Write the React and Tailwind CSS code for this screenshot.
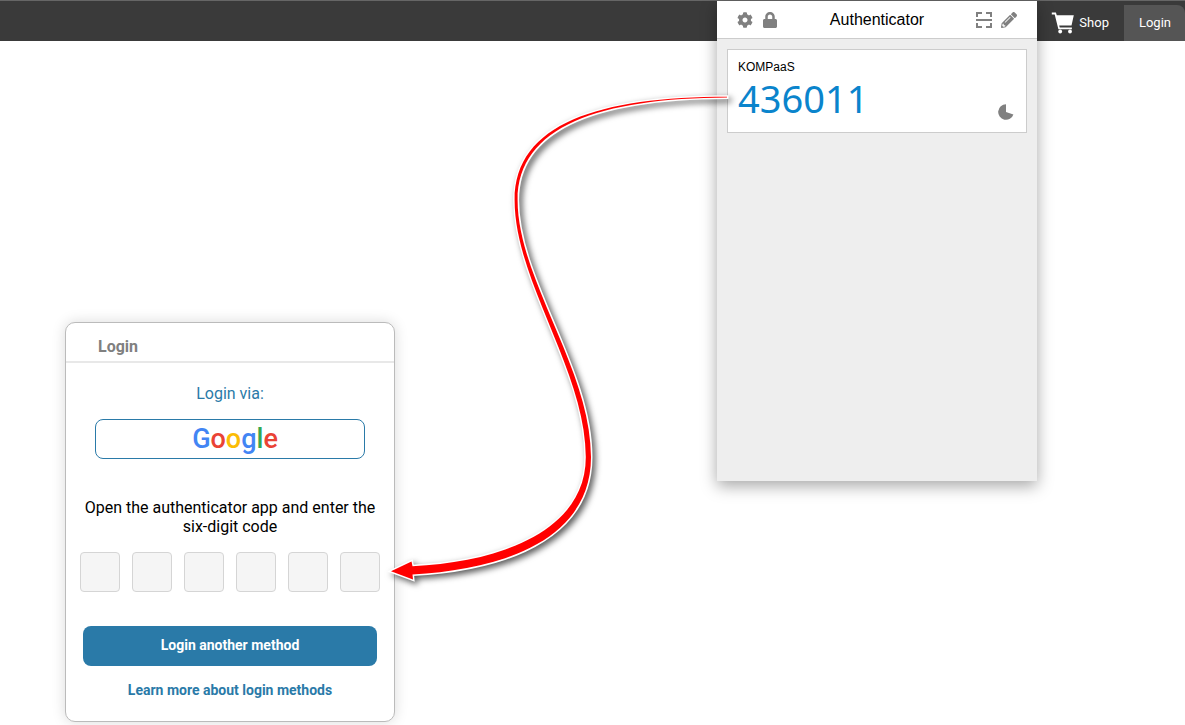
import { useState } from "react";
import { FaCog, FaLock, FaPencilAlt } from "react-icons/fa";

const BRAND = [
  { letter: "G", color: "text-[#4285f4]" },
  { letter: "o", color: "text-[#ea4335]" },
  { letter: "o", color: "text-[#fbbc05]" },
  { letter: "g", color: "text-[#4285f4]" },
  { letter: "l", color: "text-[#34a853]" },
  { letter: "e", color: "text-[#ea4335]" },
];

function CartIcon() {
  return (
    <svg viewBox="0 0 24 22" className="w-6 h-[22px]" fill="currentColor" aria-hidden="true">
      <path d="M0.8 0.6h4.1l0.9 2.6h17l-2.3 10.2H8.2l0.5 2h12.2v1.8H7.4L3.7 2.4H0.8z" />
      <circle cx="9.2" cy="19.5" r="1.9" />
      <circle cx="19" cy="19.5" r="1.9" />
    </svg>
  );
}

function ScanIcon() {
  return (
    <svg viewBox="0 0 16 16" className="size-4" fill="none" stroke="currentColor" strokeWidth="2" aria-hidden="true">
      <path d="M1 5V1h5M10 1h5v4M1 11v4h5M10 15h5v-4M0 8h16" />
    </svg>
  );
}

function TimerIcon() {
  return (
    <svg viewBox="0 0 16 16" className="size-4 text-[#808080]" fill="currentColor" aria-hidden="true">
      <path d="M8 8V0.2A7.8 7.8 0 1 0 15.4 10.4z" />
    </svg>
  );
}

function Navbar() {
  return (
    <header className="flex justify-end h-[41px] bg-[#3a3a3a] border-t border-[#666666] text-white text-[13px]">
      <nav className="flex items-end">
        <a href="#shop" className="flex items-center gap-1 h-9 px-[15px]">
          <CartIcon />
          Shop
        </a>
        <a href="#login" className="flex items-center h-9 pl-[15px] pr-[14px] bg-[#555555] rounded-tr-lg">
          Login
        </a>
      </nav>
    </header>
  );
}

function Authenticator() {
  return (
    <section className="absolute top-px left-[717px] w-80 min-h-[480px] bg-[#eeeeee] text-black font-['Liberation_Sans',Arial,sans-serif] shadow-[0_5px_15px_rgba(0,0,0,0.35)]">
      {/* TOOLBAR */}
      <div className="flex items-center justify-between h-[38px] px-5 bg-white border-b border-[#cccccc] text-[#808080]">
        <div className="flex gap-[9px]">
          <button type="button" aria-label="Settings"><FaCog className="size-4" /></button>
          <button type="button" aria-label="Lock"><FaLock className="size-4" /></button>
        </div>
        <h2 className="text-base text-black">Authenticator</h2>
        <div className="flex gap-[9px]">
          <button type="button" aria-label="Scan QR code"><ScanIcon /></button>
          <button type="button" aria-label="Edit"><FaPencilAlt className="size-4" /></button>
        </div>
      </div>

      {/* CODE ENTRY */}
      <div className="flex items-end justify-between m-[10px] h-[84px] pl-[10px] pr-3 pt-2 pb-3 bg-white border border-[#cccccc]">
        <div className="self-start">
          <p className="text-xs leading-[18px]">KOMPaaS</p>
          <p className="text-[38px] leading-[44px] text-[#0a84cc] font-['Noto_Sans',sans-serif]">436011</p>
        </div>
        <TimerIcon />
      </div>
    </section>
  );
}

function LoginCard() {
  const [code, setCode] = useState(["", "", "", "", "", ""]);

  const updateDigit = (idx, value) => {
    setCode(code.map((d, i) => (i === idx ? value : d)));
  };

  return (
    <section className="w-[330px] bg-white border border-[#bbbbbb] rounded-[10px] shadow-[0_0_14px_rgba(0,0,0,0.15)]">
      <h1 className="h-10 pt-2 px-8 border-b-2 border-[#e8e8e8] text-base leading-8 font-bold text-[#808080]">
        Login
      </h1>

      <form className="flex flex-col px-[14px] pt-[21px] pb-[21px] text-center" onSubmit={(e) => e.preventDefault()}>
        <p className="text-base leading-[19px] text-[#2a7aa8]">Login via:</p>
        <button
          type="button"
          className="mt-4 mx-[15px] h-10 pl-[10px] border border-[#2a7aa8] rounded-lg text-[27px] leading-[38px] font-medium"
        >
          {BRAND.map((b, idx) => (
            <span key={idx} className={b.color}>{b.letter}</span>
          ))}
        </button>

        <p className="mt-[39px] text-base leading-[19px] text-black">
          Open the authenticator app and enter the six-digit code
        </p>

        {/* DIGITS */}
        <div className="flex justify-between mt-4">
          {code.map((digit, idx) => (
            <input
              key={idx}
              aria-label={`Digit ${idx + 1}`}
              inputMode="numeric"
              maxLength={1}
              value={digit}
              onChange={(e) => updateDigit(idx, e.target.value)}
              className="size-10 bg-[#f5f5f5] border border-[#d5d5d5] rounded text-center"
            />
          ))}
        </div>

        <button type="submit" className="mt-[34px] mx-[3px] h-10 pb-0.5 rounded-lg bg-[#2a7aa8] text-sm font-bold text-white">
          Login another method
        </button>
        <a href="#methods" className="mt-[14px] text-sm leading-5 font-bold text-[#2a7aa8]">
          Learn more about login methods
        </a>
      </form>
    </section>
  );
}

// tapered arrow from the generated code to the digit boxes
function Arrow() {
  return (
    <svg
      viewBox="380 80 360 520"
      className="absolute top-20 left-[380px] w-[360px] h-[520px] pointer-events-none drop-shadow-[3px_3px_3px_rgba(0,0,0,0.65)]"
      aria-hidden="true"
    >
      <path
        d="M727 96.7C600 96.7 514.6 123 514.6 200C514.6 281 585.8 371 585.8 457C585.8 531 500 562 412.5 566.2L411.5 561.5L391 571.3L413 579.5L412.5 574.5C500 570 591 541 591 457C591 369 517.6 279 517.6 200C517.6 126 600 98 727 97.4Z"
        fill="#ff0000"
        stroke="#ffffff"
        strokeWidth="3"
        paintOrder="stroke"
      />
    </svg>
  );
}

export default function App() {
  return (
    <div className="relative min-h-screen bg-white font-[Roboto,sans-serif]">
      <Navbar />
      <main className="pt-[281px] pl-[65px]">
        <LoginCard />
      </main>
      <Authenticator />
      <Arrow />
    </div>
  );
}
